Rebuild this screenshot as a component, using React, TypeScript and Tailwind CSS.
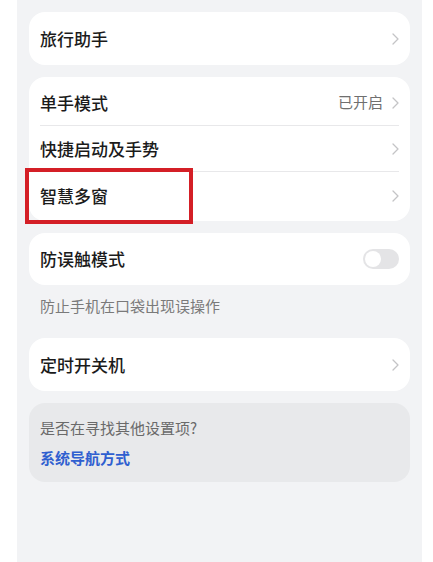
import React from 'react';

function Chevron() {
  return (
    <svg width="7" height="12" viewBox="0 0 7 12" fill="none" className="shrink-0">
      <path d="M1 1l5 5-5 5" stroke="#c4c4c6" strokeWidth="1.3" strokeLinecap="round" strokeLinejoin="round" />
    </svg>
  );
}

function Fila({ titulo, valor, h = 'h-[46px]', borde, marcado }: { titulo: string; valor?: string; h?: string; borde?: boolean; marcado?: boolean }) {
  return (
    <div className={`relative flex items-center justify-between ${h}`}>
      <span className="text-[17px] font-medium text-[#1b1b1b]">{titulo}</span>
      <div className="flex items-center gap-[9px]">
        {valor && <span className="text-[15px] text-[#6f6f6f]">{valor}</span>}
        <Chevron />
      </div>
      {borde && <div className="absolute bottom-0 left-0 right-0 h-px bg-[#e8e8ea]" />}
      {marcado && (
        <div className="pointer-events-none absolute left-[-15px] top-[-4px] h-[56px] w-[168px] border-[4px] border-[#d41f26]" />
      )}
    </div>
  );
}

export default function App() {
  return (
    <div className="h-[562px] w-[433px] bg-white pl-[17px] pr-[11px]" style={{ fontFamily: '"Noto Sans CJK SC", "Noto Sans", sans-serif' }}>
      <div className="flex h-full flex-col bg-[#f2f3f5] px-[12px] pt-[12px]">
        <div className="rounded-[16px] bg-white px-[11px]">
          <Fila titulo="旅行助手" h="h-[53px]" />
        </div>

        <div className="mt-[12px] rounded-[16px] bg-white px-[11px] py-[2px]">
          <Fila titulo="单手模式" valor="已开启" h="h-[47px]" borde />
          <Fila titulo="快捷启动及手势" h="h-[46px]" borde />
          <Fila titulo="智慧多窗" h="h-[47px]" marcado />
        </div>

        <div className="mt-[12px] flex h-[52px] items-center justify-between rounded-[16px] bg-white px-[11px]">
          <span className="text-[17px] font-medium text-[#1b1b1b]">防误触模式</span>
          <div className="flex h-[20px] w-[36px] items-center rounded-full bg-[#e4e4e6] px-[2px]">
            <div className="h-[16px] w-[16px] rounded-full bg-white" />
          </div>
        </div>
        <p className="px-[11px] pb-[22px] pt-[11px] text-[15px] leading-[20px] text-[#7a7a7a]">防止手机在口袋出现误操作</p>

        <div className="rounded-[16px] bg-white px-[11px]">
          <Fila titulo="定时开关机" h="h-[53px]" />
        </div>

        <div className="mt-[12px] rounded-[16px] bg-[#e8e9eb] px-[11px] pb-[14px] pt-[15px]">
          <p className="text-[15px] leading-[20px] text-[#6a6a6a]">是否在寻找其他设置项?</p>
          <p className="mt-[10px] text-[15px] font-semibold leading-[20px] text-[#2f5fd0]">系统导航方式</p>
        </div>
      </div>
    </div>
  );
}
